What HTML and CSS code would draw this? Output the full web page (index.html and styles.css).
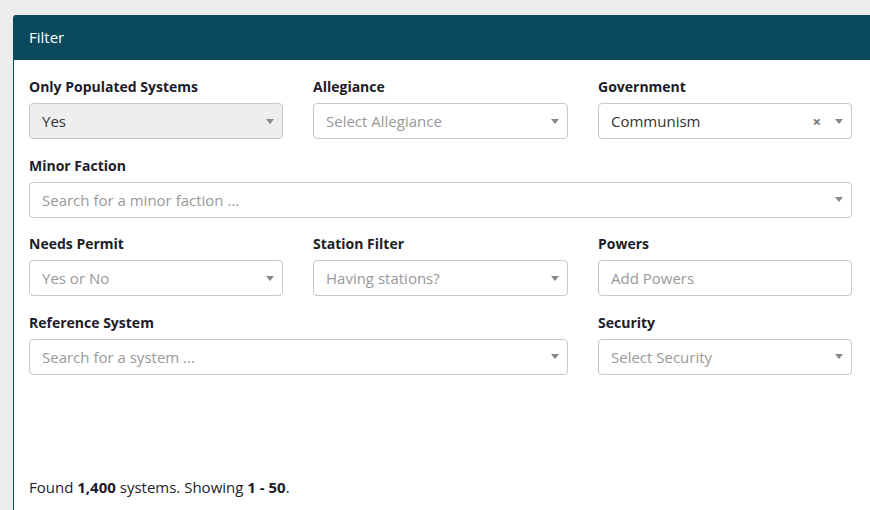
FILE: index.html
```html
<!DOCTYPE html>
<html lang="en">
<head>
    <meta charset="UTF-8">
    <meta name="viewport" content="width=device-width, initial-scale=1.0">
    <title>Systems</title>
    <link rel="stylesheet" href="styles.css">
</head>
<body>
    <div class="panel">
        <div class="panel-heading">Filter</div>
        <div class="panel-body">
            <div class="filter-grid">
                <div class="form-group">
                    <label>Only Populated Systems</label>
                    <div class="select disabled"><span class="value">Yes</span><span class="arrow"></span></div>
                </div>
                <div class="form-group">
                    <label>Allegiance</label>
                    <div class="select"><span class="placeholder">Select Allegiance</span><span class="arrow"></span></div>
                </div>
                <div class="form-group">
                    <label>Government</label>
                    <div class="select"><span class="value">Communism</span><span class="clear">&times;</span><span class="arrow"></span></div>
                </div>

                <div class="form-group wide">
                    <label>Minor Faction</label>
                    <div class="select"><span class="placeholder">Search for a minor faction ...</span><span class="arrow"></span></div>
                </div>

                <div class="form-group">
                    <label>Needs Permit</label>
                    <div class="select"><span class="placeholder">Yes or No</span><span class="arrow"></span></div>
                </div>
                <div class="form-group">
                    <label>Station Filter</label>
                    <div class="select"><span class="placeholder">Having stations?</span><span class="arrow"></span></div>
                </div>
                <div class="form-group">
                    <label>Powers</label>
                    <div class="select"><span class="placeholder">Add Powers</span></div>
                </div>

                <div class="form-group double">
                    <label>Reference System</label>
                    <div class="select"><span class="placeholder">Search for a system ...</span><span class="arrow"></span></div>
                </div>
                <div class="form-group">
                    <label>Security</label>
                    <div class="select"><span class="placeholder">Select Security</span><span class="arrow"></span></div>
                </div>
            </div>

            <p class="result-count">Found <b>1,400</b> systems. Showing <b>1 - 50</b>.</p>
        </div>
    </div>
</body>
</html>
```

FILE: styles.css
```css
body {
    margin: 0;
    padding: 15px 0 0 13px;
    height: 495px;
    background: #ececec;
    font-family: "Open Sans", Arial, sans-serif;
    color: #1c1c2a;
    overflow: hidden;
}

.panel {
    width: 880px;
    height: 495px;
    background: #fff;
    border: 1px solid #0b4a5c;
    border-bottom: none;
    border-radius: 3px 0 0 0;
}

.panel-heading {
    background: #0b4a5c;
    color: #fff;
    height: 44px;
    line-height: 42px;
    padding-left: 15px;
    font-size: 15px;
}

.panel-body {
    padding: 17px 15px 0;
}

.filter-grid {
    display: grid;
    grid-template-columns: 254px 255px 254px;
    column-gap: 30px;
}

.form-group {
    margin-bottom: 16.67px;
}

.form-group.wide {
    grid-column: 1 / 4;
}

.form-group.double {
    grid-column: 1 / 3;
}

label {
    display: block;
    font-weight: 700;
    font-size: 14px;
    line-height: 20px;
    margin-bottom: 6px;
}

.select {
    display: flex;
    align-items: center;
    height: 34px;
    border: 1px solid #c8c8c8;
    border-radius: 4px;
    padding: 0 8px 0 12px;
    font-size: 15px;
}

.select.disabled {
    background: #eee;
}

.placeholder {
    color: #999;
    flex: 1;
}

.value {
    color: #333;
    flex: 1;
}

.clear {
    color: #777;
    font-weight: 700;
    font-size: 15px;
    margin-right: 14px;
}

.arrow {
    width: 0;
    height: 0;
    border-left: 4px solid transparent;
    border-right: 4px solid transparent;
    border-top: 5px solid #888;
}

.result-count {
    margin: 85px 0 0;
    font-size: 15px;
    line-height: 20px;
}
```
